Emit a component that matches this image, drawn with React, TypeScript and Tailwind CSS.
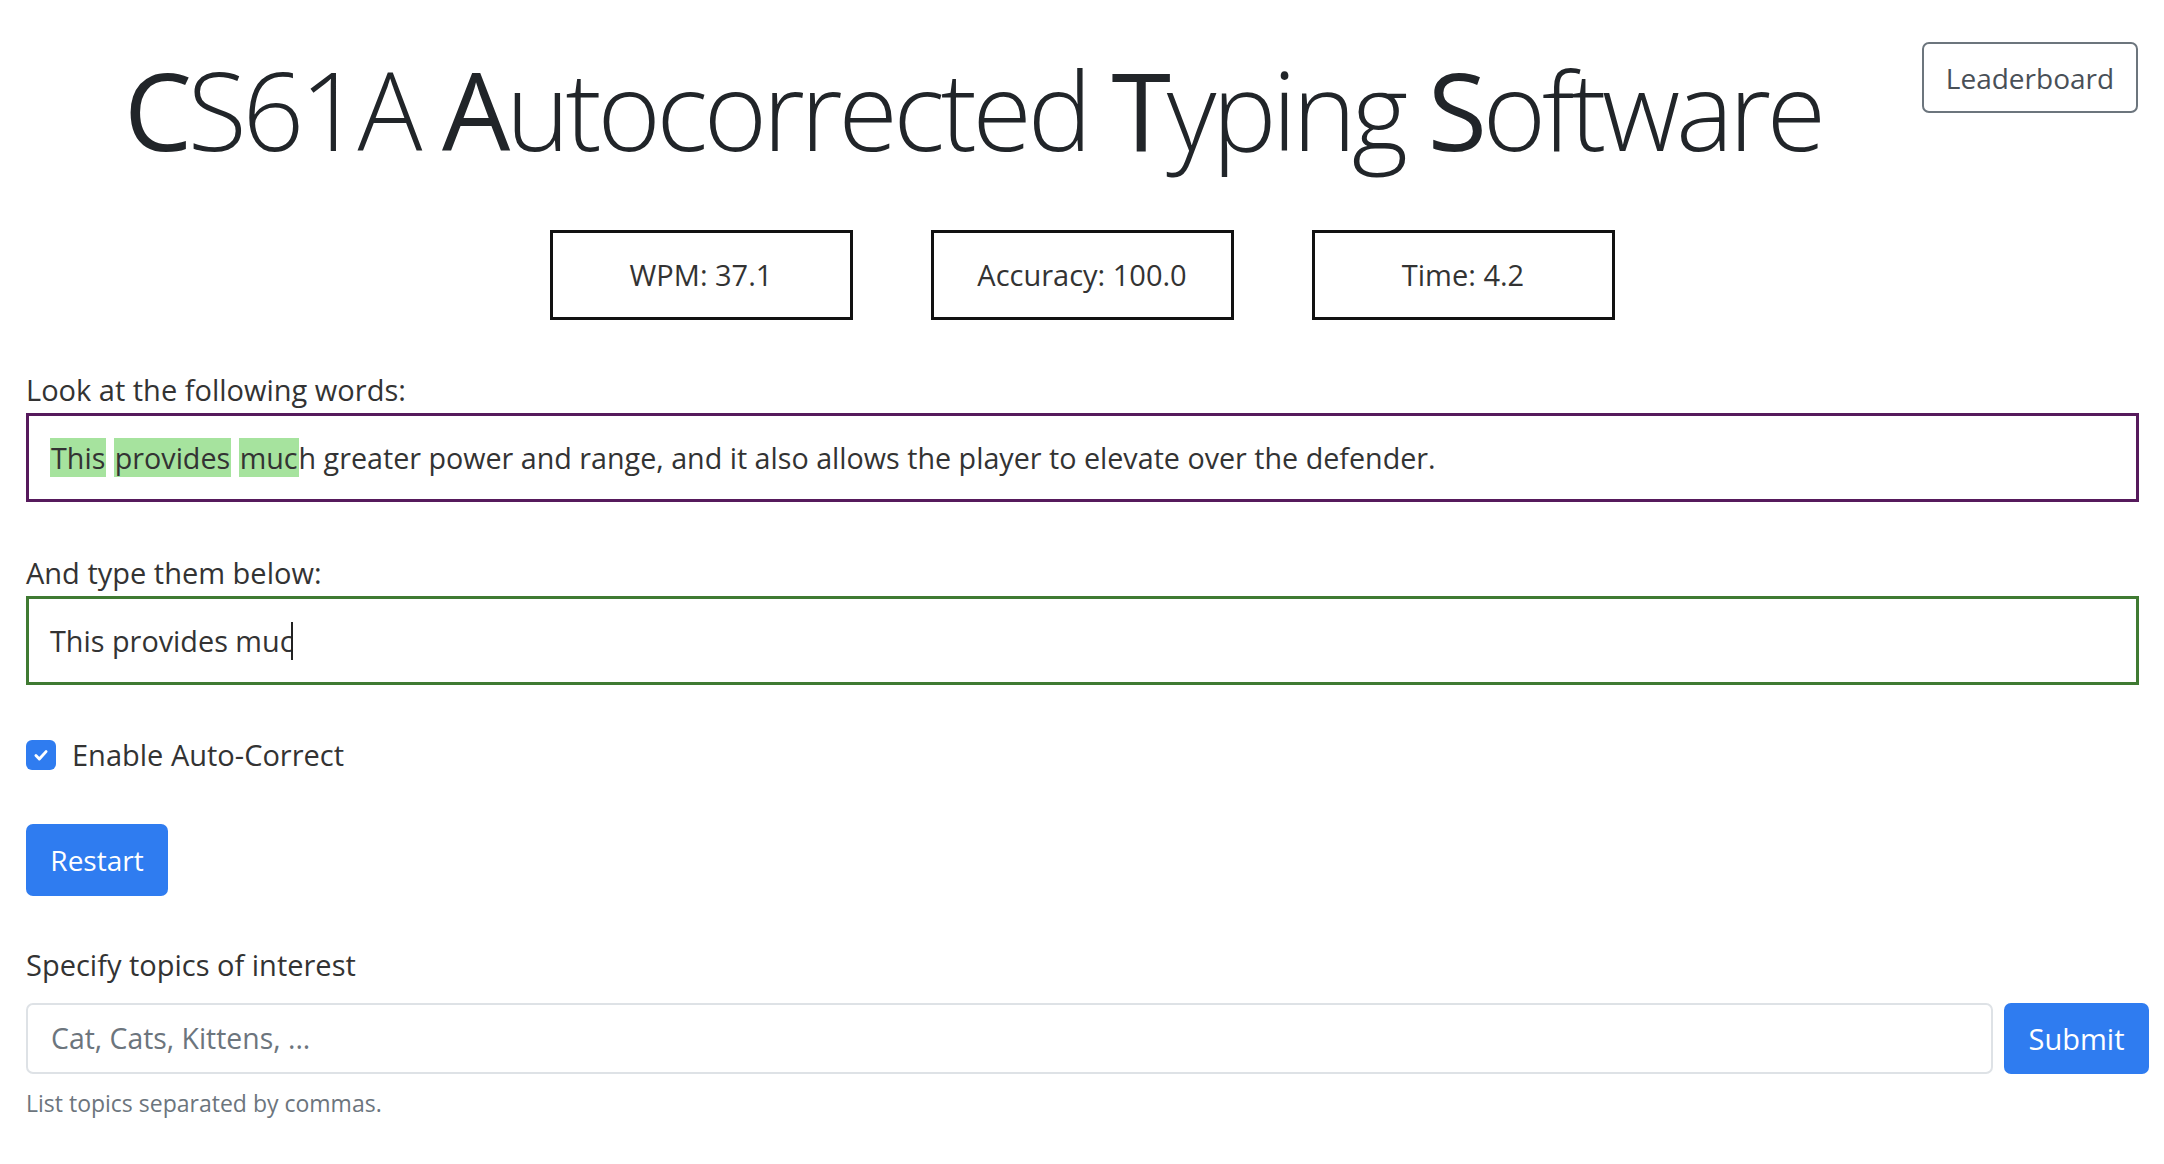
import React from "react";

export default function App() {
  return (
    <div className="min-h-screen w-full bg-white text-[#212529] font-['Open_Sans','Noto_Sans',sans-serif]">
      {/* Header */}
      <div className="flex items-start justify-between h-[230px]">
        <h1 className="ml-[124px] mt-[50px] text-[108px] leading-[120px] font-light tracking-[-0.039em] text-[#212529] whitespace-nowrap">
          <span className="font-medium">C</span>S61A <span className="font-medium">A</span>utocorrected{" "}
          <span className="font-medium">T</span>yping <span className="font-medium">S</span>oftware
        </h1>
        <button className="mt-[42px] mr-[26px] w-[216px] h-[71px] border-2 border-[#6c757d] rounded-[7px] text-[28px] text-[#495057] bg-white">
          Leaderboard
        </button>
      </div>

      {/* Stats */}
      <div className="flex justify-center gap-[78px]">
        {["WPM: 37.1", "Accuracy: 100.0", "Time: 4.2"].map((t) => (
          <div
            key={t}
            className="w-[303px] h-[90px] border-[3px] border-[#111] flex items-center justify-center text-[29px] text-[#333]"
          >
            {t}
          </div>
        ))}
      </div>

      <div className="px-[26px] pr-[25px]">
        {/* Prompt */}
        <div className="mt-[50px] text-[29px] leading-[40px] text-[#333]">Look at the following words:</div>
        <div className="mt-[3px] h-[89px] border-[3px] border-[#561a5c] flex items-center pl-[21px] text-[28.7px] text-[#333]">
          <span className="bg-[#a6e39e] leading-[39px] px-[1px]">This</span>
          <span>&nbsp;</span>
          <span className="bg-[#a6e39e] leading-[39px] px-[1px]">provides</span>
          <span>&nbsp;</span>
          <span className="bg-[#a6e39e] leading-[39px] px-[1px]">muc</span>
          <span>h greater power and range, and it also allows the player to elevate over the defender.</span>
        </div>

        {/* Typing */}
        <div className="mt-[51px] text-[29px] leading-[40px] text-[#333]">And type them below:</div>
        <div className="mt-[3px] h-[89px] border-[3px] border-[#3f7a32] flex items-center pl-[21px] text-[28.8px] text-[#333]">
          <span>This provides muc</span>
          <span className="inline-block w-[2px] h-[38px] bg-[#222] -ml-[2px]" />
        </div>

        {/* Checkbox */}
        <div className="mt-[55px] flex items-center h-[30px]">
          <div className="w-[30px] h-[30px] rounded-[6px] bg-[#2f7cf0] flex items-center justify-center">
            <svg width="18" height="18" viewBox="0 0 16 16" fill="none">
              <path d="M3.5 8.5l3 3 6-6.5" stroke="white" strokeWidth="2.6" strokeLinecap="round" strokeLinejoin="round" />
            </svg>
          </div>
          <span className="ml-[16px] text-[29px] text-[#333]">Enable Auto-Correct</span>
        </div>

        {/* Restart */}
        <button className="mt-[54px] w-[142px] h-[72px] rounded-[7px] bg-[#2f7cf0] text-white text-[28px]">
          Restart
        </button>

        {/* Topics */}
        <div className="mt-[49px] text-[29px] leading-[40px] text-[#333]">Specify topics of interest</div>
        <div className="mt-[18px] flex gap-[11px]">
          <div className="flex-1 h-[71px] border-2 border-[#dee2e6] rounded-[7px] flex items-center pl-[23px] text-[28.4px] text-[#6c757d]">
            Cat, Cats, Kittens, ...
          </div>
          <button className="w-[145px] h-[71px] rounded-[7px] bg-[#2f7cf0] text-white text-[29px] -mr-[10px]">
            Submit
          </button>
        </div>
        <div className="mt-[14px] text-[23px] leading-[30px] text-[#6c757d]">List topics separated by commas.</div>
      </div>
    </div>
  );
}
